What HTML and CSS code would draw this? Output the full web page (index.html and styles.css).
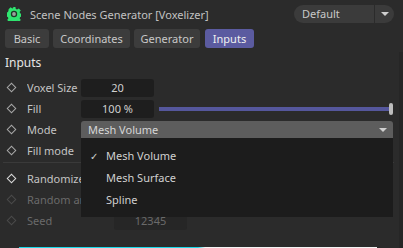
FILE: index.html
```html
<!DOCTYPE html>
<html lang="en">
<head>
    <meta charset="UTF-8">
    <title>Scene Nodes Generator [Voxelizer]</title>
    <link rel="stylesheet" href="styles.css">
</head>
<body>
    <div class="panel">
        <!-- Header -->
        <div class="header">
            <svg class="gear" width="14" height="14" viewBox="0 0 14 14">
                <path fill="#2fe56f" d="M5.6 0h2.8l.4 2 1.3.6 1.7-1.2 2 2-1.2 1.7.6 1.3 2 .4v2.8l-2 .4-.6 1.3 1.2 1.7-2 2-1.7-1.2-1.3.6-.4 2H5.6l-.4-2-1.3-.6-1.7 1.2-2-2 1.2-1.7-.6-1.300-2-.4V5.6l2-.4.6-1.3L1.6 2.200l2-2 1.7 1.2 1.3-.6z"/>
                <circle cx="7" cy="7" r="3.2" fill="#1f3a28"/>
                <circle cx="7" cy="7" r="1.9" fill="#9aa39d"/>
            </svg>
            <span class="title">Scene Nodes Generator [Voxelizer]</span>
            <div class="preset">
                <span class="preset-label">Default</span>
                <span class="preset-arrow"><span class="tri"></span></span>
            </div>
        </div>

        <!-- Tabs -->
        <div class="tabs">
            <button class="tab tab-basic">Basic</button>
            <button class="tab tab-coord">Coordinates</button>
            <button class="tab tab-gen">Generator</button>
            <button class="tab tab-inputs active">Inputs</button>
        </div>

        <h3 class="section-title">Inputs</h3>

        <div class="params">
            <div class="row">
                <span class="key"></span>
                <span class="label">Voxel Size</span>
                <span class="field">20</span>
            </div>
            <div class="row">
                <span class="key"></span>
                <span class="label">Fill</span>
                <span class="field">100 %</span>
                <div class="slider">
                    <div class="track"></div>
                    <div class="handle"></div>
                </div>
            </div>
            <div class="row">
                <span class="key"></span>
                <span class="label">Mode</span>
                <div class="dropdown">
                    <span>Mesh Volume</span>
                    <span class="tri"></span>
                    <div class="menu">
                        <div class="menu-item"><span class="check">&#10003;</span>Mesh Volume</div>
                        <div class="menu-item">Mesh Surface</div>
                        <div class="menu-item">Spline</div>
                    </div>
                </div>
            </div>
            <div class="row">
                <span class="key"></span>
                <span class="label">Fill mode</span>
            </div>

            <div class="separator"></div>

            <div class="row">
                <span class="key bright"></span>
                <span class="label">Randomize</span>
            </div>
            <div class="row dim">
                <span class="key"></span>
                <span class="label">Random an</span>
            </div>
            <div class="row dim">
                <span class="key"></span>
                <span class="label wide">Seed</span>
                <span class="field">12345</span>
            </div>
        </div>
    </div>
    <div class="scroll-edge"></div>
    <div class="focus-line"></div>
</body>
</html>
```

FILE: styles.css
```css
/* General Styles */
html, body {
    margin: 0;
    padding: 0;
    height: 100%;
}
body {
    background-color: #2b2b2b;
    color: #c4c4c4;
    font-family: "Noto Sans", "Open Sans", sans-serif;
    font-size: 11px;
    overflow: hidden;
    position: relative;
}
.panel {
    padding: 5px 9px 0 5px;
}

/* Header */
.header {
    display: flex;
    align-items: center;
    height: 18px;
}
.gear {
    margin: 0 9px 0 2px;
}
.title {
    color: #c2c2c2;
    flex: 1;
}
.preset {
    display: flex;
    width: 100px;
    height: 18px;
    background-color: #3b3b3b;
    border-radius: 9px;
}
.preset-label {
    flex: 1;
    padding-left: 8px;
    line-height: 18px;
    color: #c8c8c8;
}
.preset-arrow {
    width: 19px;
    border-left: 1px solid #2b2b2b;
    display: flex;
    align-items: center;
    justify-content: center;
}
.tri {
    width: 0;
    height: 0;
    border-left: 4px solid transparent;
    border-right: 4px solid transparent;
    border-top: 4px solid #cfcfcf;
}

/* Tabs */
.tabs {
    display: flex;
    gap: 4px;
    margin-top: 6px;
}
.tab {
    font: inherit;
    color: #c8c8c8;
    background-color: #3c3c3c;
    border: none;
    border-radius: 3px;
    height: 19px;
    padding: 0;
}
.tab-basic { width: 44px; }
.tab-coord { width: 77px; }
.tab-gen { width: 66px; }
.tab-inputs { width: 49px; margin-left: 1px; }
.tab.active {
    background-color: #5b5ba0;
    color: #f0f0f0;
}

.section-title {
    margin: 6px 0 0 0;
    height: 18px;
    line-height: 18px;
    font-size: 12px;
    font-weight: normal;
    color: #e6e6e6;
}

/* Parameters */
.params {
    margin-top: 5px;
}
.row {
    display: flex;
    align-items: center;
    height: 21px;
}
.key {
    width: 7px;
    height: 7px;
    border: 1.5px solid #a8a8a8;
    transform: rotate(45deg);
    margin: 0 12px 0 3px;
    box-sizing: border-box;
}
.key.bright {
    border-color: #dcdcdc;
}
.label {
    width: 54px;
    white-space: nowrap;
    overflow: hidden;
}
.label.wide {
    width: 87px;
}
.field {
    width: 73px;
    height: 18px;
    line-height: 18px;
    text-align: center;
    background-color: #1e1e1e;
    border-radius: 3px;
    color: #d0d0d0;
}
.dim {
    color: #6a6a6a;
}
.dim .key {
    border-color: #4a4a4a;
}
.dim .field {
    color: #6a6a6a;
    background-color: #262626;
}

.slider {
    flex: 1;
    position: relative;
    height: 12px;
    margin-left: 5px;
    margin-right: 1px;
}
.track {
    position: absolute;
    left: 0;
    right: 2px;
    top: 4px;
    height: 4px;
    background-color: #55579c;
}
.handle {
    position: absolute;
    right: 0;
    top: 0;
    width: 4px;
    height: 12px;
    border-radius: 2px;
    background-color: #bdbdbd;
}

.dropdown {
    position: relative;
    flex: 1;
    display: flex;
    align-items: center;
    justify-content: space-between;
    height: 17px;
    padding: 0 6px 0 7px;
    margin-right: 1px;
    background-color: #5d5d5d;
    border-radius: 3px 3px 0 0;
    color: #d6d6d6;
}
.menu {
    position: absolute;
    left: 0;
    right: 0;
    top: 17px;
    height: 79px;
    padding-top: 7px;
    box-sizing: border-box;
    background-color: #1c1c1c;
    z-index: 2;
}
.menu-item {
    height: 22px;
    line-height: 22px;
    padding-left: 25px;
    position: relative;
    color: #d0d0d0;
}
.check {
    position: absolute;
    left: 9px;
    font-size: 10px;
}

.separator {
    height: 1px;
    background-color: #3a3a3a;
    margin: 1px 0 5px -2px;
}

.scroll-edge {
    position: absolute;
    right: 0;
    top: 52px;
    bottom: 0;
    width: 4px;
    background-color: #262626;
}
.focus-line {
    position: absolute;
    left: 19px;
    width: 358px;
    bottom: 0;
    height: 1px;
    background: linear-gradient(to right, #1ad8e8, #1ad8e8 50%, #f4f4f4 52%);
}
```
